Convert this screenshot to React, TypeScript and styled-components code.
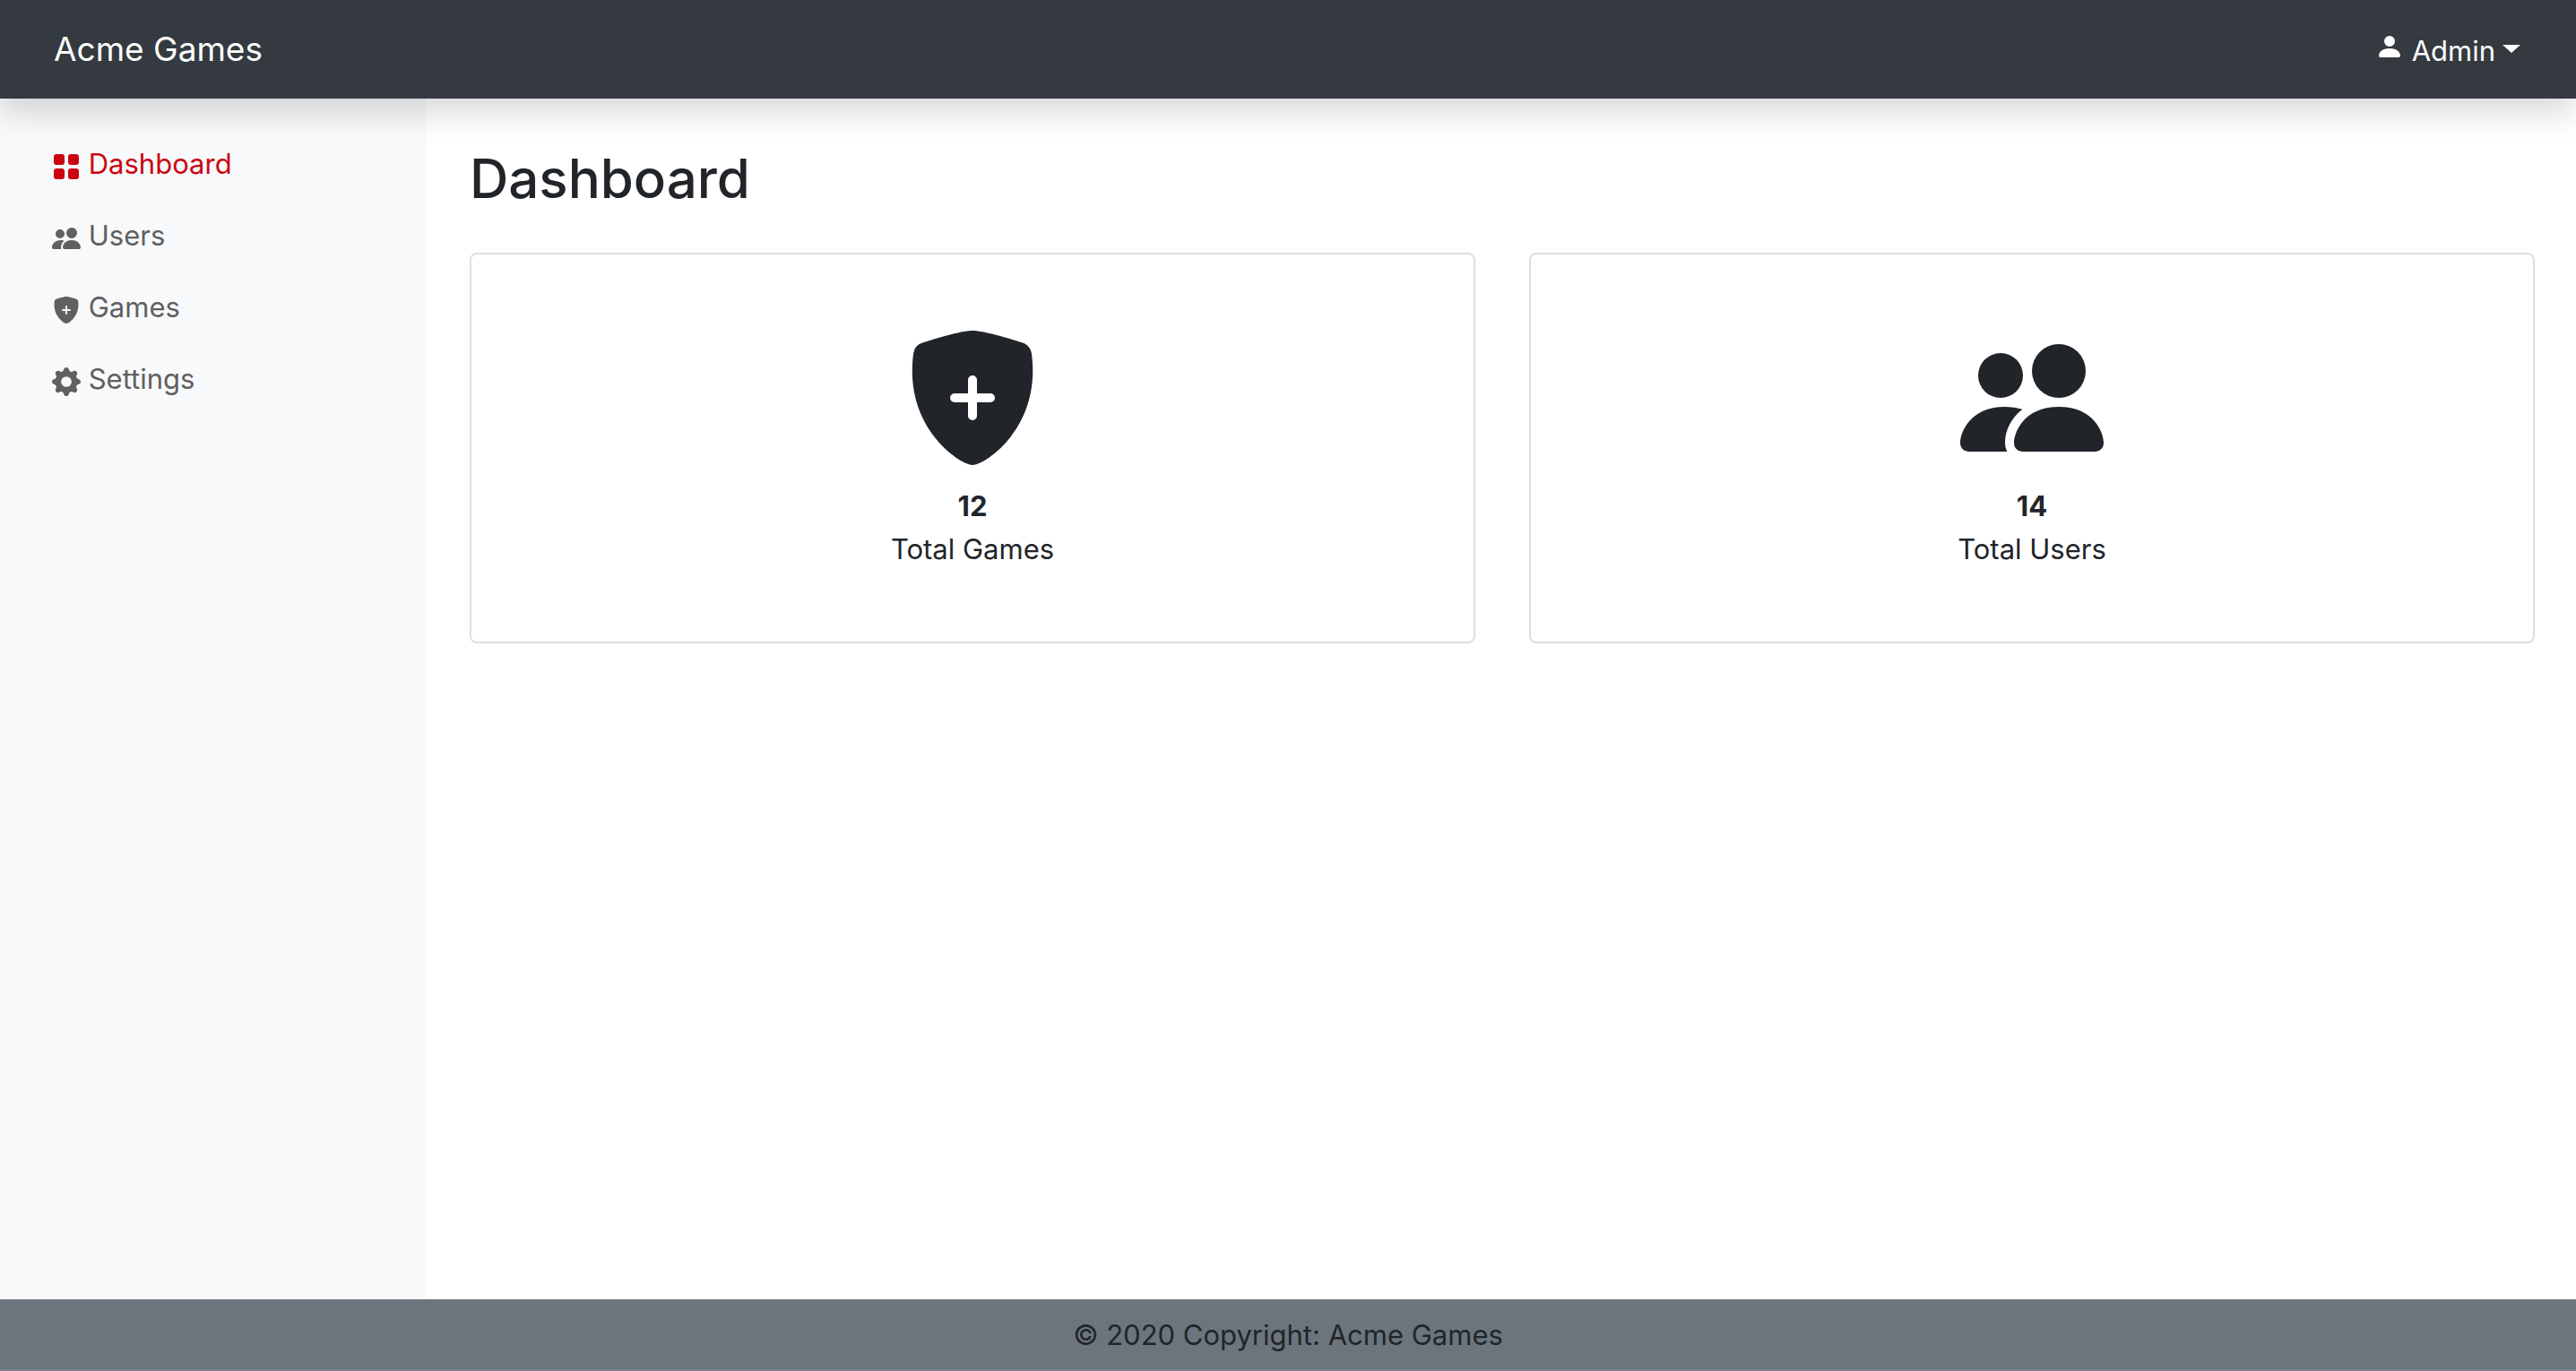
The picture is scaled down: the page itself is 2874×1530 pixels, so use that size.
import React from 'react';
import styled, { createGlobalStyle } from 'styled-components';

const GlobalStyle = createGlobalStyle`
  *, *::before, *::after { box-sizing: border-box; }
  body {
    margin: 0;
    background: #fff;
    color: #212529;
    font-family: Inter, "Liberation Sans", sans-serif;
    font-size: 31px;
    line-height: 48px;
  }
`;

const Page = styled.div`
  display: flex;
  flex-direction: column;
  min-height: 100vh;
`;

const Header = styled.header`
  position: relative;
  z-index: 1;
  display: flex;
  align-items: center;
  justify-content: space-between;
  height: 110px;
  padding: 0 62px 0 60px;
  background: #343a40;
  color: #fff;
  box-shadow: 0 16px 32px rgba(0, 0, 0, 0.15);
`;

const Brand = styled.a`
  color: inherit;
  font-size: 37px;
  text-decoration: none;
`;

const AccountButton = styled.button`
  padding: 4px 0 0;
  border: 0;
  background: none;
  color: inherit;
  font: inherit;
  cursor: pointer;
`;

const Caret = styled.span`
  display: inline-block;
  margin-left: 8px;
  vertical-align: 9px;
  border-top: 9px solid;
  border-right: 10px solid transparent;
  border-left: 10px solid transparent;
`;

const Body = styled.div`
  display: flex;
  flex: 1;
`;

const Sidebar = styled.nav`
  flex: 0 0 476px;
  padding: 33px 58px;
  background: #f8f9fb;
`;

const NavList = styled.ul`
  margin: 0;
  padding: 0;
  list-style: none;
`;

const NavLink = styled.a<{ $active?: boolean }>`
  display: block;
  padding: 16px 0;
  color: ${({ $active }) => ($active ? '#cb0510' : '#606060')};
  text-decoration: none;

  svg { vertical-align: middle; }
`;

const Main = styled.main`
  flex: 1;
  padding: 50px 46px 48px 48px;
`;

const Title = styled.h1`
  margin: 0 0 44px;
  font-size: 60px;
  font-weight: 500;
  line-height: 78px;
`;

const Cards = styled.div`
  display: grid;
  grid-template-columns: 1fr 1fr;
  gap: 60px;
`;

const Card = styled.section`
  display: flex;
  flex-direction: column;
  align-items: center;
  padding: 80px 80px 79px;
  border: 2px solid #dfdfdf;
  border-radius: 8px;

  svg { margin-bottom: 17px; }
`;

const Footer = styled.footer`
  padding: 17px 16px 15px;
  border-bottom: 2px solid #7b848c;
  background: #6c757d;
  line-height: 46px;
  text-align: center;
`;

const paths = {
  grid: 'M1 2.5A1.5 1.5 0 0 1 2.5 1h3A1.5 1.5 0 0 1 7 2.5v3A1.5 1.5 0 0 1 5.5 7h-3A1.5 1.5 0 0 1 1 5.5v-3zm8 0A1.5 1.5 0 0 1 10.5 1h3A1.5 1.5 0 0 1 15 2.5v3A1.5 1.5 0 0 1 13.5 7h-3A1.5 1.5 0 0 1 9 5.5v-3zm-8 8A1.5 1.5 0 0 1 2.5 9h3A1.5 1.5 0 0 1 7 10.5v3A1.5 1.5 0 0 1 5.5 15h-3A1.5 1.5 0 0 1 1 13.5v-3zm8 0A1.5 1.5 0 0 1 10.5 9h3a1.5 1.5 0 0 1 1.5 1.5v3a1.5 1.5 0 0 1-1.5 1.5h-3A1.5 1.5 0 0 1 9 13.5v-3z',
  people: 'M7 14s-1 0-1-1 1-4 5-4 5 3 5 4-1 1-1 1H7zm4-6a3 3 0 1 0 0-6 3 3 0 0 0 0 6zm-5.784 6A2.238 2.238 0 0 1 5 13c0-1.355.68-2.75 1.936-3.72A6.325 6.325 0 0 0 5 9c-4 0-5 3-5 4s1 1 1 1h4.216zM4.5 8a2.5 2.5 0 1 0 0-5 2.5 2.5 0 0 0 0 5z',
  shield: 'M5.187 1.025C6.23.749 7.337.5 8 .5c.662 0 1.77.249 2.813.525a61.09 61.09 0 0 1 2.772.815c.528.168.926.623 1.003 1.184.573 4.197-.756 7.307-2.367 9.365a11.191 11.191 0 0 1-2.418 2.3 6.942 6.942 0 0 1-1.007.586c-.27.124-.558.225-.796.225s-.526-.101-.796-.225a6.908 6.908 0 0 1-1.007-.586 11.192 11.192 0 0 1-2.417-2.3C2.167 10.331.839 7.221 1.412 3.024A1.454 1.454 0 0 1 2.415 1.84a61.11 61.11 0 0 1 2.772-.815zM8.5 6a.5.5 0 0 0-1 0v1.5H6a.5.5 0 0 0 0 1h1.5V10a.5.5 0 0 0 1 0V8.5H10a.5.5 0 0 0 0-1H8.5V6z',
  gear: 'M9.405 1.05c-.413-1.4-2.397-1.4-2.81 0l-.1.34a1.464 1.464 0 0 1-2.105.872l-.31-.17c-1.283-.698-2.686.705-1.987 1.987l.169.311c.446.82.023 1.841-.872 2.105l-.34.1c-1.4.413-1.4 2.397 0 2.81l.34.1a1.464 1.464 0 0 1 .872 2.105l-.17.31c-.698 1.283.705 2.686 1.987 1.987l.311-.169a1.464 1.464 0 0 1 2.105.872l.1.34c.413 1.4 2.397 1.4 2.81 0l.1-.34a1.464 1.464 0 0 1 2.105-.872l.31.17c1.283.698 2.686-.705 1.987-1.987l-.169-.311a1.464 1.464 0 0 1 .872-2.105l.34-.1c1.4-.413 1.4-2.397 0-2.81l-.34-.1a1.464 1.464 0 0 1-.872-2.105l.17-.31c.698-1.283-.705-2.686-1.987-1.987l-.311.169a1.464 1.464 0 0 1-2.105-.872l-.1-.34zM8 10.93a2.929 2.929 0 1 0 0-5.86 2.929 2.929 0 0 0 0 5.858z',
  person: 'M3 14s-1 0-1-1 1-4 6-4 6 3 6 4-1 1-1 1H3zm5-6a3 3 0 1 0 0-6 3 3 0 0 0 0 6z',
};

type IconName = keyof typeof paths;

const Icon = ({ name, size = 32 }: { name: IconName; size?: number }) => (
  <svg width={size} height={size} viewBox="0 0 16 16" fill="currentColor" aria-hidden="true">
    <path fillRule="evenodd" d={paths[name]} />
  </svg>
);

const links: { icon: IconName; label: string; active?: boolean }[] = [
  { icon: 'grid', label: 'Dashboard', active: true },
  { icon: 'people', label: 'Users' },
  { icon: 'shield', label: 'Games' },
  { icon: 'gear', label: 'Settings' },
];

const totals: { icon: IconName; count: number; label: string }[] = [
  { icon: 'shield', count: 12, label: 'Total Games' },
  { icon: 'people', count: 14, label: 'Total Users' },
];

export default function App() {
  return (
    <Page>
      <GlobalStyle />
      <Header>
        <Brand href="#">Acme Games</Brand>
        <AccountButton type="button" aria-haspopup="menu">
          <Icon name="person" /> Admin
          <Caret />
        </AccountButton>
      </Header>
      <Body>
        <Sidebar>
          <NavList>
            {links.map(({ icon, label, active }) => (
              <li key={label}>
                <NavLink href="#" $active={active} aria-current={active ? 'page' : undefined}>
                  <Icon name={icon} /> {label}
                </NavLink>
              </li>
            ))}
          </NavList>
        </Sidebar>
        <Main>
          <Title>Dashboard</Title>
          <Cards>
            {totals.map(({ icon, count, label }) => (
              <Card key={label}>
                <Icon name={icon} size={160} />
                <strong>{count}</strong>
                <span>{label}</span>
              </Card>
            ))}
          </Cards>
        </Main>
      </Body>
      <Footer>© 2020 Copyright: Acme Games</Footer>
    </Page>
  );
}
